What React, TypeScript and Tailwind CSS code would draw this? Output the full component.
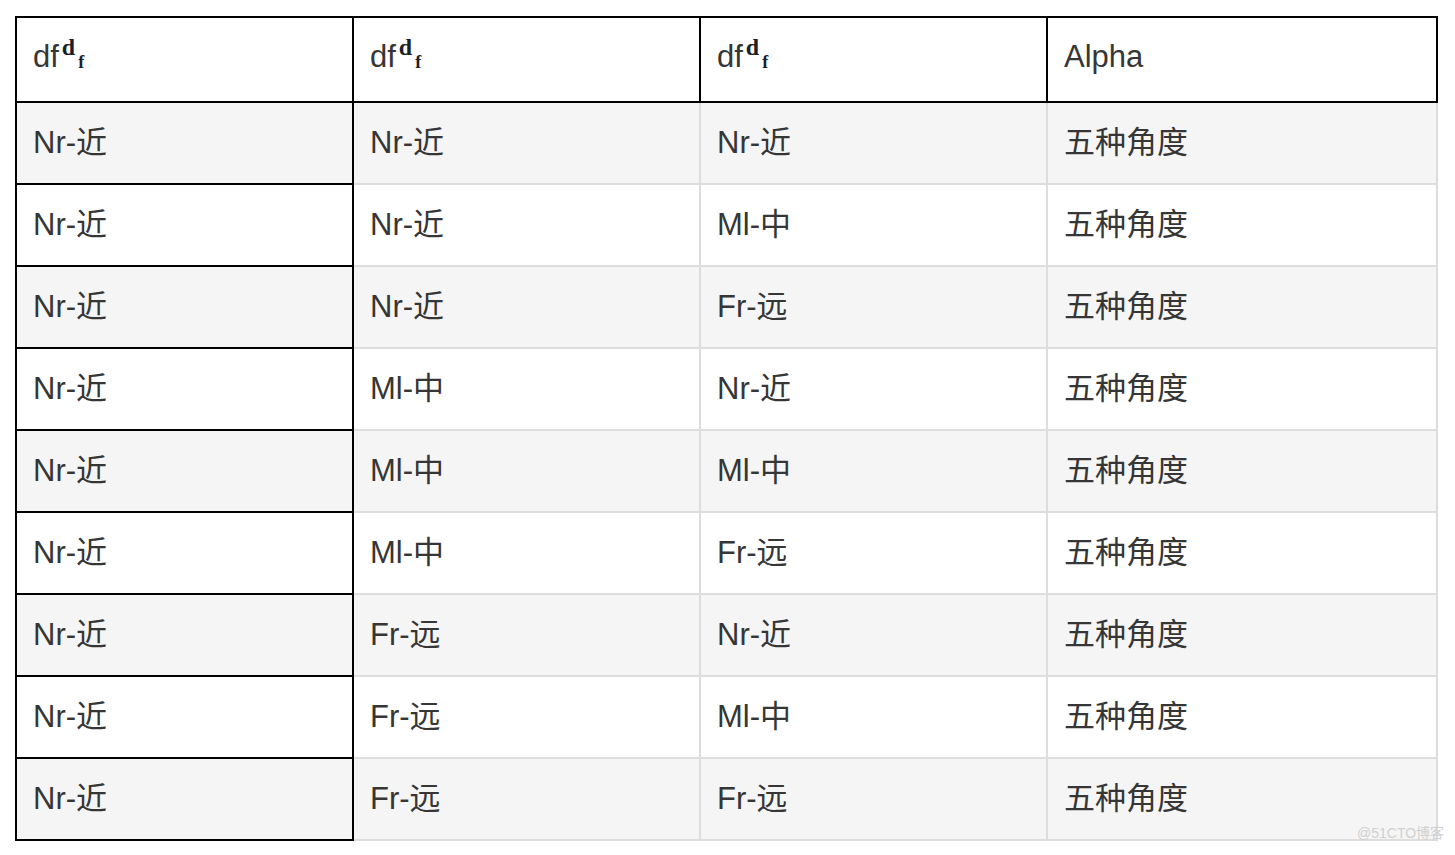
const rows: [string, string, string][] = [
  ["Nr-近", "Nr-近", "Nr-近"],
  ["Nr-近", "Nr-近", "Ml-中"],
  ["Nr-近", "Nr-近", "Fr-远"],
  ["Nr-近", "Ml-中", "Nr-近"],
  ["Nr-近", "Ml-中", "Ml-中"],
  ["Nr-近", "Ml-中", "Fr-远"],
  ["Nr-近", "Fr-远", "Nr-近"],
  ["Nr-近", "Fr-远", "Ml-中"],
  ["Nr-近", "Fr-远", "Fr-远"],
];

function DfLabel() {
  return (
    <span className="whitespace-nowrap">
      df
      <span className="ml-[3px] font-['Liberation_Serif',serif] font-bold text-[#1a1f2b]">
        <span className="relative -top-[12px] text-2xl leading-none">d</span>
        <span className="relative top-[1px] ml-[3px] text-lg leading-none">f</span>
      </span>
    </span>
  );
}

export default function App() {
  const head = "border-2 border-black px-4 pt-[22px] align-top text-left font-normal leading-[34px] h-[85px]";
  const cell = "h-[82px] border-2 px-4 align-middle leading-[34px]";
  return (
    <div
      className="relative h-[855px] w-full bg-white pt-[16px] pl-[15px] text-[31px] text-[#363636]"
      style={{ fontFamily: '"Liberation Sans", "Noto Sans CJK SC", sans-serif' }}
    >
      <table className="table-fixed border-collapse w-[1421px]">
        <colgroup>
          <col className="w-[337px]" />
          <col className="w-[347px]" />
          <col className="w-[347px]" />
          <col className="w-[390px]" />
        </colgroup>
        <thead>
          <tr>
            <th className={head}>
              <DfLabel />
            </th>
            <th className={head}>
              <DfLabel />
            </th>
            <th className={head}>
              <DfLabel />
            </th>
            <th className={head}>Alpha</th>
          </tr>
        </thead>
        <tbody>
          {rows.map((r, i) => (
            <tr key={i} className={i % 2 === 0 ? "bg-[#f5f5f5]" : "bg-white"}>
              <td className={`${cell} border-black`}>{r[0]}</td>
              <td className={`${cell} border-[#dddddd]`}>{r[1]}</td>
              <td className={`${cell} border-[#dddddd]`}>{r[2]}</td>
              <td className={`${cell} border-[#dddddd]`}>五种角度</td>
            </tr>
          ))}
        </tbody>
      </table>
      <span className="absolute left-[1357px] top-[826px] text-[14px] leading-none text-[#d0d0d0]">@51CTO博客</span>
    </div>
  );
}
